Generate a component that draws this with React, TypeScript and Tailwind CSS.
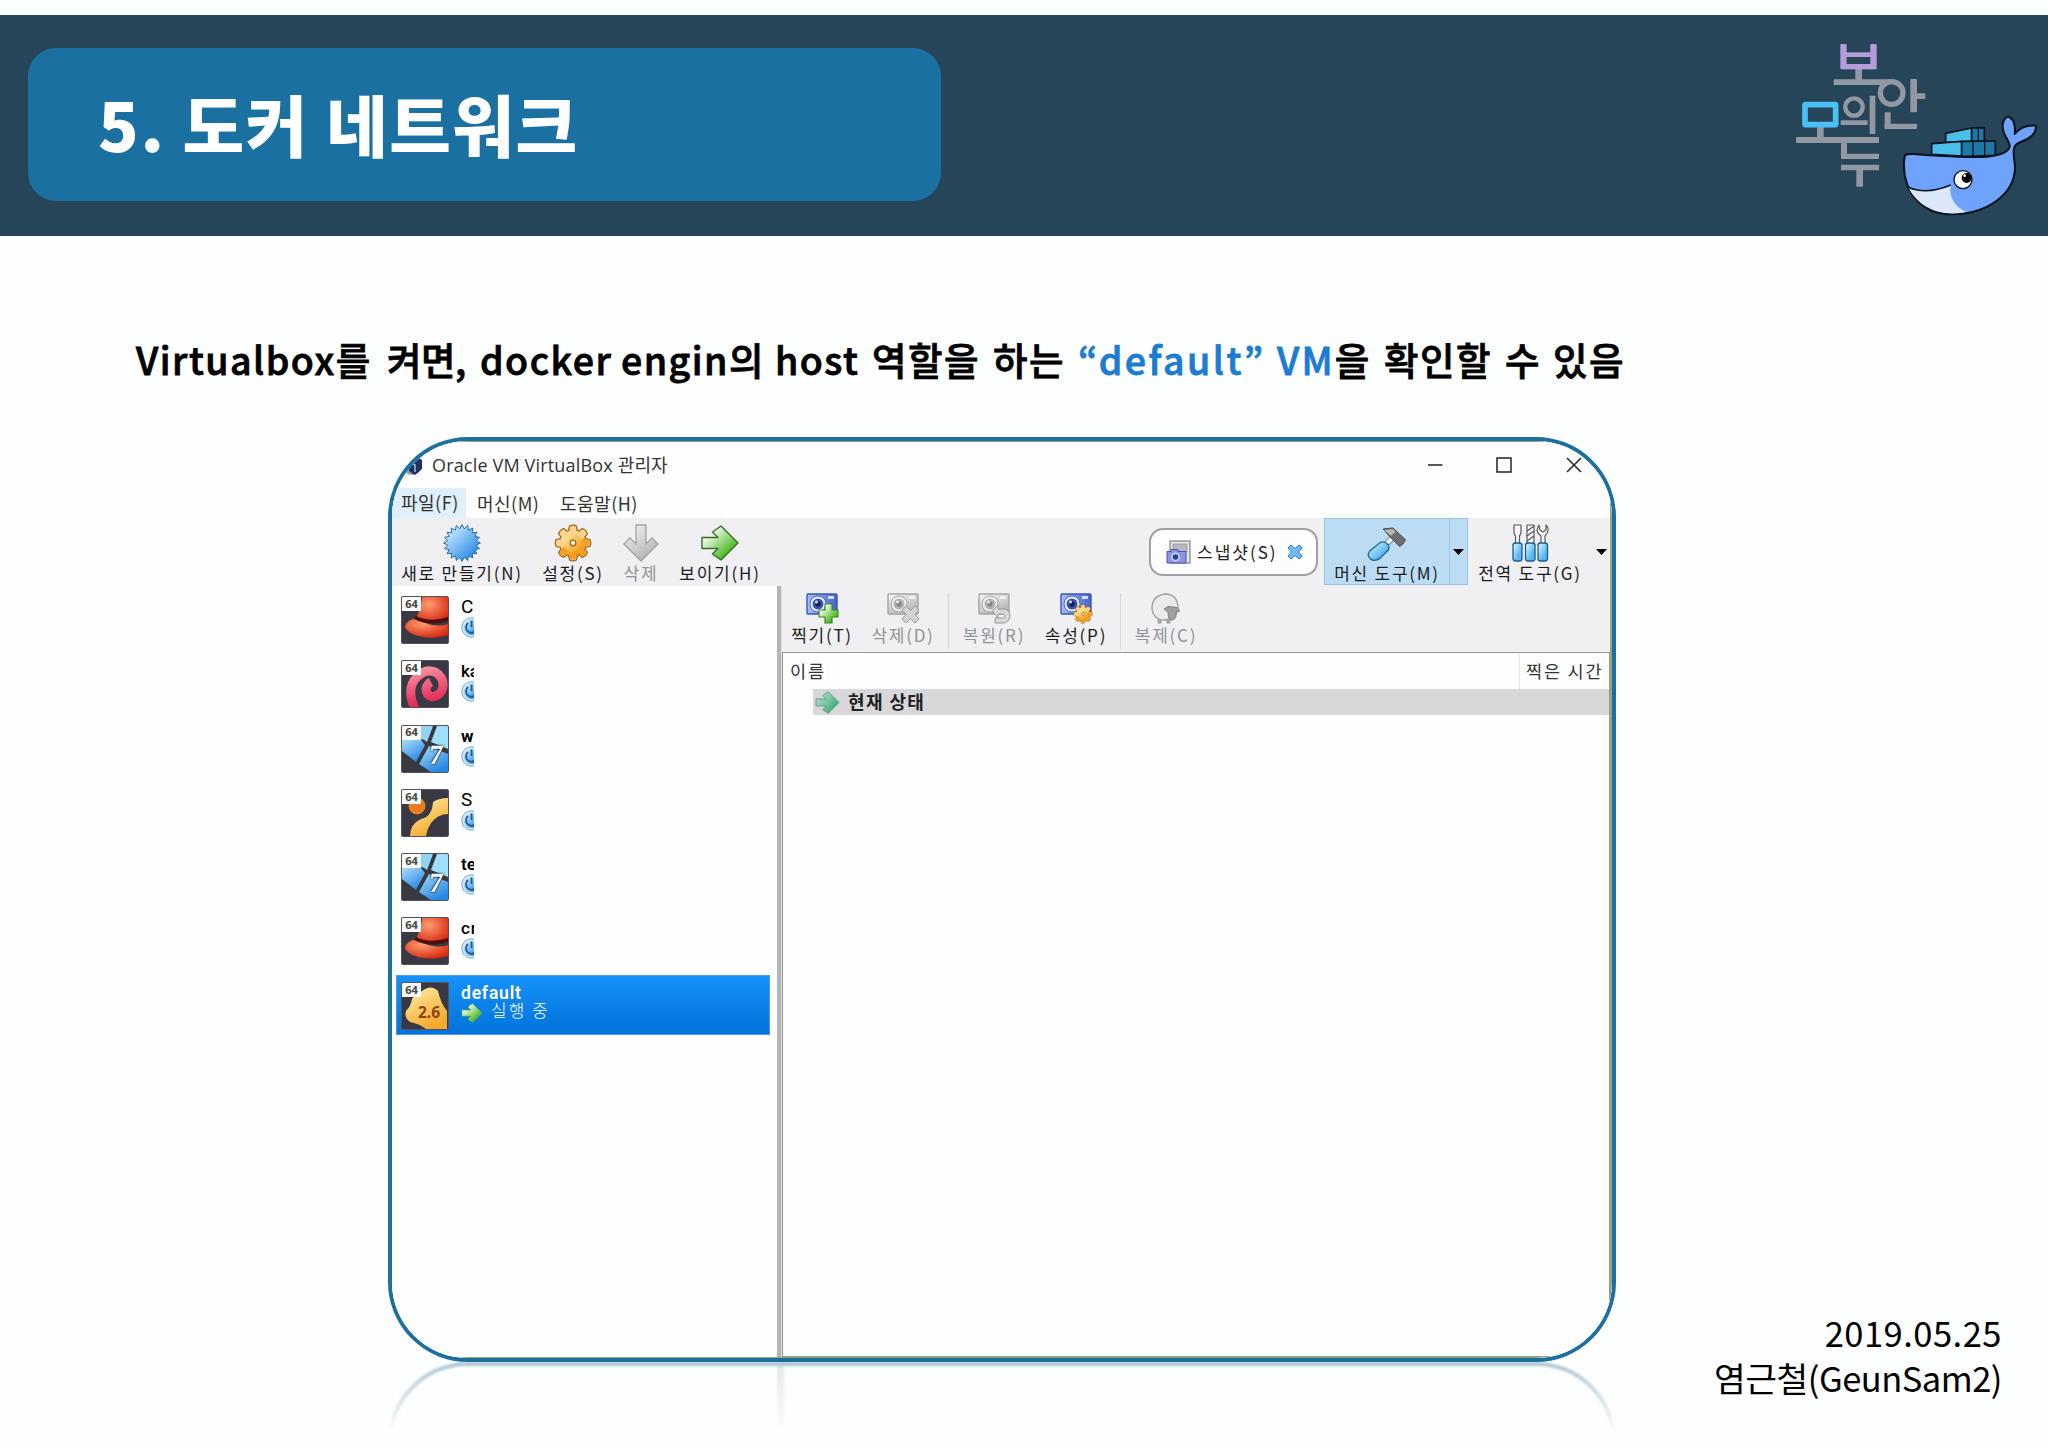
import type { ReactNode } from "react";
import clsx from "clsx";

type OsKind = "redhat" | "debian" | "win7" | "ubuntu" | "linux26";

interface Machine {
  name: string;
  os: OsKind;
  nameClass: string;
}

const machines: Machine[] = [
  { name: "C", os: "redhat", nameClass: "font-normal text-[19px]" },
  { name: "ka", os: "debian", nameClass: "font-medium" },
  { name: "w", os: "win7", nameClass: "font-bold" },
  { name: "S", os: "ubuntu", nameClass: "font-normal text-[19px]" },
  { name: "te", os: "win7", nameClass: "font-semibold" },
  { name: "cr", os: "redhat", nameClass: "font-medium tracking-[1px]" },
];

function Gradients() {
  return (
    <svg className="absolute h-0 w-0">
      <defs>
        <linearGradient id="blue" x1="0" y1="0" x2="1" y2="1">
          <stop offset="0.1" stopColor="#d3efff" />
          <stop offset="0.9" stopColor="#1d84e6" />
        </linearGradient>
        <linearGradient id="orange" x1="0" y1="0" x2="1" y2="1">
          <stop offset="0.1" stopColor="#fff0c4" />
          <stop offset="0.8" stopColor="#f59a13" />
        </linearGradient>
        <linearGradient id="green" x1="0" y1="0" x2="1" y2="1">
          <stop offset="0.2" stopColor="#f4fff0" />
          <stop offset="0.8" stopColor="#3fb312" />
        </linearGradient>
        <linearGradient id="teal" x1="0" y1="0" x2="1" y2="0.8">
          <stop offset="0" stopColor="#c3e6dc" />
          <stop offset="1" stopColor="#2fa866" />
        </linearGradient>
        <linearGradient id="gray" x1="0" y1="0" x2="0.6" y2="1">
          <stop offset="0" stopColor="#f6f6f6" />
          <stop offset="1" stopColor="#b3b3b5" />
        </linearGradient>
        <linearGradient id="camera" x1="0" y1="0" x2="1" y2="0">
          <stop offset="0" stopColor="#a9bdf8" />
          <stop offset="1" stopColor="#4263d6" />
        </linearGradient>
        <linearGradient id="handle" x1="0" y1="0" x2="1" y2="1">
          <stop offset="0" stopColor="#e6fbff" />
          <stop offset="0.7" stopColor="#55b4f2" />
        </linearGradient>
        <radialGradient id="red" cx="0.4" cy="0.3" r="0.75">
          <stop offset="0" stopColor="#ff9c72" />
          <stop offset="1" stopColor="#d8260e" />
        </radialGradient>
        <linearGradient id="pink" x1="0.3" y1="0" x2="0.5" y2="1">
          <stop offset="0" stopColor="#f98a9a" />
          <stop offset="1" stopColor="#e0184c" />
        </linearGradient>
        <linearGradient id="yellow" x1="0" y1="0" x2="0.5" y2="1">
          <stop offset="0" stopColor="#ffefae" />
          <stop offset="1" stopColor="#f5aa2c" />
        </linearGradient>
        <linearGradient id="pane" x1="0" y1="0" x2="0.6" y2="1">
          <stop offset="0" stopColor="#a5dffb" />
          <stop offset="1" stopColor="#2a86e4" />
        </linearGradient>
      </defs>
    </svg>
  );
}

function Logo() {
  return (
    <svg className="h-[220px] w-[268px] shrink-0" viewBox="0 0 804 660">
      <g fill="#9198a1">
        <rect x="226" y="146" width="20" height="34" />
        <rect x="161" y="178" width="170" height="17" rx="2" />
        <circle cx="335" cy="219" r="34" fill="#264559" stroke="#9198a1" strokeWidth="16" />
        <rect x="391" y="177" width="20" height="100" rx="2" />
        <rect x="405" y="220" width="31" height="17" rx="2" />
        <rect x="314" y="277" width="18" height="49" rx="2" />
        <rect x="314" y="311" width="97" height="16" rx="2" />
        <circle cx="222" cy="261" r="26" fill="none" stroke="#9198a1" strokeWidth="13" />
        <rect x="182" y="301" width="81" height="14" rx="2" />
        <rect x="269" y="227" width="17" height="115" rx="2" />
        <rect x="111" y="320" width="20" height="34" />
        <rect x="48" y="351" width="249" height="18" rx="2" />
        <rect x="183" y="360" width="18" height="57" rx="2" />
        <rect x="183" y="401" width="114" height="16" rx="2" />
        <rect x="183" y="434" width="114" height="17" rx="2" />
        <rect x="229" y="448" width="20" height="52" rx="2" />
      </g>
      <g fill="#b59ddb">
        <rect x="181" y="72" width="19" height="76" rx="3" />
        <rect x="271" y="72" width="19" height="76" rx="3" />
        <rect x="190" y="97" width="90" height="14" />
        <rect x="190" y="132" width="90" height="16" />
      </g>
      <rect x="75" y="254" width="92" height="60" rx="2" fill="none" stroke="#4bc0f7" strokeWidth="17" />

      <g stroke="#07121c" strokeWidth="5" strokeLinejoin="round">
        <path d="M497 340 575 324V364L497 368Z" fill="#49bfea" />
        <path d="M575 324 613 323V364H575Z" fill="#1b7ba6" />
        <path d="M455 371 545 364V408L455 403Z" fill="#49bfea" />
        <path d="M545 364 646 363V406L545 410Z" fill="#1b7ba6" />
        <path d="M579 364V410M614 363V408M595 326V360" fill="none" strokeWidth="4" />
        <path
          d="M375 405C385 401 395 402 402 402C470 407 560 414 620 410C660 406 684 398 689 380C691 362 665 345 668 315C670 296 680 287 690 292C703 300 707 322 704 342C720 322 745 315 768 317C770 341 748 358 722 366C708 371 702 380 701 392C700 410 705 425 705 445C702 525 620 582 515 583C425 583 368 515 372 425Z"
          fill="#6fa2fa"
          strokeWidth="6"
        />
        <path
          d="M386 503C425 518 472 512 512 497C506 530 525 563 560 575C480 594 412 558 386 503Z"
          fill="#dde7fb"
          stroke="none"
        />
        <path d="M383 501C425 520 472 512 512 495" fill="none" />
        <circle cx="549" cy="479" r="27" fill="#fff" strokeWidth="4" />
        <circle cx="560" cy="474" r="15" fill="#000" stroke="none" />
        <circle cx="554" cy="467" r="4" fill="#fff" stroke="none" />
      </g>
    </svg>
  );
}

function NewIcon() {
  const points = Array.from({ length: 40 }, (_, i) => {
    const r = i % 2 ? 14.4 : 18.4;
    const a = (i * Math.PI) / 20;
    return `${19 + r * Math.sin(a)},${19 - r * Math.cos(a)}`;
  }).join(" ");
  return (
    <svg className="h-[38px] w-[38px]" viewBox="0 0 38 38">
      <polygon points={points} fill="url(#blue)" stroke="#2c6da8" strokeWidth="1" />
    </svg>
  );
}

function Gear({ className }: { className?: string }) {
  const teeth = [0, 45, 90, 135, 180, 225, 270, 315];
  return (
    <svg className={className} viewBox="0 0 38 38">
      {teeth.map((deg) => (
        <path
          key={deg}
          d="M14 9 15.500 2Q19 .4 22.500 2L24 9"
          fill="#fbbf55"
          stroke="#9c6a20"
          strokeWidth="1.2"
          transform={`rotate(${deg} 19 19)`}
        />
      ))}
      <circle cx="19" cy="19" r="13.6" fill="#9c6a20" />
      <circle cx="19" cy="19" r="12.8" fill="url(#orange)" />
      {teeth.map((deg) => (
        <path key={deg} d="M15 10 16.300 3Q19 1.8 21.700 3L23 10Z" fill={deg > 60 && deg < 230 ? "#f59f1d" : "#fdd489"} transform={`rotate(${deg} 19 19)`} />
      ))}
      <circle cx="19" cy="19" r="2.8" fill="#fff0cf" stroke="#9c6a20" strokeWidth="1.3" />
    </svg>
  );
}

function ArrowIcon({ className, fill = "url(#green)", stroke = "#3c6b2a" }: { className?: string; fill?: string; stroke?: string }) {
  return (
    <svg className={className} viewBox="0 0 38 36">
      <path d="M1 12.5H17L11.5 7 20 1 37 18 20 35 11.5 29 17 23.5H1Z" fill={fill} stroke={stroke} strokeWidth="1.4" strokeLinejoin="round" />
    </svg>
  );
}

function HammerIcon() {
  return (
    <svg className="h-[36px] w-[42px]" viewBox="0 0 42 36">
      <path d="M17 17 25 9 29 13 21 20Z" fill="#eee" stroke="#666" />
      <path d="M17 2 27 1 40 13 38 17 34 20 23 9Z" fill="#6e6d70" stroke="#47484b" strokeLinejoin="round" />
      <path d="M18 3 27 2 30 5 25 9Z" fill="#b8b8ba" />
      <path d="M14 16Q18 14 22 18Q24 21 22 24L14 32Q9 36 4 33Q0 29 3 25Z" fill="url(#handle)" stroke="#1d6590" strokeWidth="1.4" />
    </svg>
  );
}

function ToolsIcon() {
  return (
    <svg className="h-[38px] w-[37px]" viewBox="0 0 37 38">
      <g fill="#f4f4f4" stroke="#58595c" strokeWidth="1.2" strokeLinejoin="round">
        <path d="M2 1H9V9L7.500 12V20H3.500V12L2 9Z" />
        <path d="M15 1H22V20H15Z" />
        <path d="M27 1Q24 6 26 9Q28 11 29 12V20H33V12Q36 9 36.200 6Q36 3 34 1V6L31 8 28 6Z" />
      </g>
      <path d="M15 7 22 2M15 12 22 7M15 17 22 12" stroke="#58595c" strokeWidth="1.3" />
      <g fill="url(#handle)" stroke="#1c5d88" strokeWidth="1.3">
        <rect x="1" y="19" width="9" height="18" rx="2.500" />
        <rect x="13.500" y="19" width="9.500" height="18" rx="2.500" />
        <rect x="26" y="19" width="9.500" height="18" rx="2.500" />
      </g>
    </svg>
  );
}

function SnapshotIcon() {
  return (
    <svg className="h-[24px] w-[25px]" viewBox="0 0 25 24">
      <rect x="4" y="1" width="20" height="22" fill="#e6e6e6" stroke="#6d6d70" />
      <rect x="7" y="4" width="14" height="8" fill="#b9bac0" stroke="#8a8a90" strokeWidth="0.700" />
      <path d="M1 11.500H5V9.500H12V11.500H20V23H1Z" fill="#8a95e6" stroke="#4a55b0" />
      <circle cx="9.500" cy="17" r="4.400" fill="#d0d6fa" />
      <circle cx="9.500" cy="17" r="2.800" fill="#2e3a96" />
    </svg>
  );
}

type CameraBadge = "plus" | "cross" | "undo" | "gear";

function CameraIcon({ badge, muted }: { badge: CameraBadge; muted?: boolean }) {
  return (
    <div className="relative h-[31px] w-[33px]">
      <svg className="h-[31px] w-[33px]" viewBox="0 0 33 31">
        <rect x="1" y="1" width="30" height="20" rx="1" fill={muted ? "url(#gray)" : "url(#camera)"} stroke={muted ? "#a4a4a6" : "#3b57b4"} strokeWidth="1.4" />
        <rect x="22" y="3" width="6" height="3" fill="#f4f6ff" opacity="0.8" />
        <circle cx="12" cy="11" r="8" fill={muted ? "#f1f1f1" : "#eef2ff"} stroke={muted ? "#a5a5a5" : "#4966be"} />
        <circle cx="12" cy="11" r="5.500" fill={muted ? "#b2b2b2" : "#3c55ac"} />
        <circle cx="12" cy="11" r="2.700" fill={muted ? "#888" : "#141c5c"} />
        <circle cx="10.500" cy="9" r="1.500" fill="#fff" opacity="0.8" />
        {badge === "plus" && <path d="M19 11H26V17H32V24H26V30H19V24H13V17H19Z" fill="url(#green)" stroke="#3f8a1c" strokeWidth="1.200" />}
        {badge === "cross" && <path d="M19 13 23.500 17.500 28 13 32 17 28 21.500 32 26 28 30 23.500 25.500 19 30 15 26 19 21.500 15 17Z" fill="#d4d4d4" stroke="#999" />}
        {badge === "undo" && <path d="M20 12V16H26Q32 17 32 23Q31 30 25 30H17V25H25Q27 25 27 22.500Q26 21 24 21H20V25L14 18Z" fill="#d8d8d8" stroke="#999" />}
      </svg>
      {badge === "gear" && <Gear className="absolute top-[11px] left-[13px] h-[20px] w-[20px]" />}
    </div>
  );
}

function SheepIcon() {
  return (
    <svg className="h-[31px] w-[32px]" viewBox="0 0 32 31">
      <path d="M8 25V30H11V26M17 26V30H20V25" fill="#aaa" stroke="#99999b" />
      <path d="M15 1Q27 1 28 14Q27 26 15 27Q3 27 2 15Q2 3 15 1Z" fill="#ebebec" stroke="#a0a0a2" strokeWidth="1.400" />
      <path d="M14 16Q18 12 22 14Q27 13 30 18L26 19Q27 26 22 27Q18 27 18 19Z" fill="#a0a0a2" stroke="#808083" />
    </svg>
  );
}

function PowerIcon() {
  return (
    <svg className="h-[21px] w-[21px] shrink-0" viewBox="0 0 21 21">
      <circle cx="10.500" cy="10.500" r="9.700" fill="#d5ecfb" stroke="#6ea6cc" />
      <circle cx="10.500" cy="10.500" r="7.600" fill="url(#blue)" />
      <path d="M7 6A5.500 5.500 0 1 0 14 6M10.500 3.500V10" fill="none" stroke="#1b5c9a" strokeWidth="1.800" />
    </svg>
  );
}

function OsIcon({ os }: { os: OsKind }) {
  return (
    <div className="relative h-[48px] w-[48px] shrink-0 overflow-hidden rounded-[2px] border border-[#53545c] bg-[#393943]">
      <svg className="h-[46px] w-[46px]" viewBox="0 0 46 46">
        {os === "redhat" && (
          <>
            <path d="M3 30Q4 23 15 21Q30 32 46 27V38Q32 43 16 39Q4 35 3 30Z" fill="url(#red)" />
            <path d="M14 21Q19 12 20 0H46V24Q28 28 14 21Z" fill="url(#red)" />
            <path d="M14 19Q28 26 46 20V24Q28 30 12 22Z" fill="#4b0f12" />
          </>
        )}
        {os === "debian" && (
          <path
            d="M13 48Q4 28 14 17Q23 7 33 11Q42 16 41 26Q39 35 30 36Q24 34 24 28Q25 23 29 21"
            fill="none"
            stroke="url(#pink)"
            strokeWidth="9"
          />
        )}
        {os === "win7" && (
          <>
            <path d="M19 0H31L25 16Q22 13 19 13Z" fill="#8fd3f5" />
            <path d="M35 0H46V23L29 16Z" fill="#9ee0fb" />
            <path d="M0 14H19L23 19 14 36 0 25Z" fill="url(#pane)" />
            <path d="M27 20 46 28V46H29L17 38Z" fill="url(#pane)" />
          </>
        )}
        {os === "ubuntu" && (
          <>
            <circle cx="15" cy="16" r="8.500" fill="#ee7a22" />
            <path d="M8 46Q8 34 19 29Q30 27 31 12Q37 8 46 8V24Q36 24 29 33Q25 39 24 46Z" fill="url(#yellow)" />
          </>
        )}
        {os === "linux26" && (
          <path d="M20 8Q29 1 36 8Q39 21 45 28V46H24Q18 41 8 39Q2 35 4 28Q9 23 10 16Q14 10 20 8Z" fill="url(#yellow)" />
        )}
      </svg>
      {os === "win7" && (
        <span className="absolute right-[5px] bottom-[5px] -skew-x-6 font-['Liberation_Serif',serif] text-[28px] leading-[24px] font-bold text-white [text-shadow:0_0_2px_#123,0_0_2px_#123]">
          7
        </span>
      )}
      {os === "linux26" && (
        <span className="absolute right-[8px] bottom-[9px] font-['Noto_Sans',sans-serif] text-[15.500px] leading-[16px] font-bold text-[#8a4312]">
          2.6
        </span>
      )}
      <span className="absolute top-0 left-0 flex h-[14px] w-[19px] items-center justify-center bg-[#fafafa] font-['Noto_Sans',sans-serif] text-[11px] font-bold text-[#444]">
        64
      </span>
    </div>
  );
}

function ToolButton({ icon, label, className, muted }: { icon: ReactNode; label: string; className?: string; muted?: boolean }) {
  return (
    <div className={clsx("flex shrink-0 flex-col items-center", muted ? "text-[#939395]" : "text-[#1c1c1e]", className)}>
      {icon}
      <span className="text-[17px] leading-[22px] tracking-[1.750px] whitespace-nowrap">{label}</span>
    </div>
  );
}

function Caret({ className }: { className?: string }) {
  return (
    <svg className={clsx("h-[6px] w-[11px] shrink-0", className)} viewBox="0 0 11 6">
      <path d="M0 0H11L5.500 6Z" fill="#000" />
    </svg>
  );
}

function TitleBar() {
  return (
    <div className="flex h-[46px] shrink-0 items-center pl-[11px] text-[#333]">
      <svg className="h-[20px] w-[20px]" viewBox="0 0 20 20">
        <circle cx="9" cy="10" r="10" fill="#8b98bb" />
        <path d="M5 4 12 0 19 5V14L12 20 6 16Z" fill="#1d3260" />
        <path d="M7 7 12 10V17" fill="none" stroke="#a8bfe6" strokeWidth="1.500" />
      </svg>
      <span className="ml-[9px] font-['Open_Sans','Noto_Sans_CJK_KR',sans-serif] text-[18px] tracking-[0.170px] whitespace-nowrap">
        Oracle VM VirtualBox 관리자
      </span>
      <svg className="mr-[28px] ml-auto h-[16px] w-[154px] shrink-0" viewBox="0 0 154 16" fill="none" stroke="#222" strokeWidth="1.500">
        <path d="M0 8H14.500" />
        <rect x="69" y="1" width="14" height="14" />
        <path d="M139 1 153 15M153 1 139 15" />
      </svg>
    </div>
  );
}

function MenuBar() {
  return (
    <div className="flex h-[30px] shrink-0 items-center text-[18px] leading-[29px] tracking-[0.500px] whitespace-nowrap text-[#333]">
      <span className="h-[30px] w-[74px] bg-[#dff0fc] pl-[9px]">파일(F)</span>
      <span className="ml-[11px] w-[72px]">머신(M)</span>
      <span className="ml-[11px]">도움말(H)</span>
    </div>
  );
}

function MainToolbar() {
  return (
    <div className="flex h-[68px] shrink-0 bg-[#f0eff1]">
      <ToolButton className="ml-[6px] w-[128px] pt-[6px]" icon={<NewIcon />} label="새로 만들기(N)" />
      <ToolButton className="ml-[12px] w-[70px] pt-[6px]" icon={<Gear className="h-[38px] w-[38px]" />} label="설정(S)" />
      <ToolButton
        className="ml-[8px] w-[50px] pt-[6px]"
        muted
        icon={
          <svg className="h-[38px] w-[36px]" viewBox="0 0 36 38">
            <path d="M13 1H23V20L29 14 35 20 18 37 1 20 7 14 13 20Z" fill="url(#gray)" stroke="#a3a3a5" strokeWidth="1.300" />
          </svg>
        }
        label="삭제"
      />
      <ToolButton className="ml-[9px] w-[90px] pt-[6px]" icon={<ArrowIcon className="h-[38px] w-[38px]" />} label="보이기(H)" />

      <div className="mt-[10px] ml-[384px] flex h-[48px] w-[169px] shrink-0 items-center rounded-[14px] border-2 border-[#a0a0a2] bg-[#fdfdfd] pl-[15px] text-[#222]">
        <SnapshotIcon />
        <span className="ml-[6px] w-[82px] text-[17px] tracking-[2px] whitespace-nowrap">스냅샷(S)</span>
        <svg className="ml-[8px] h-[16px] w-[16px]" viewBox="0 0 16 16">
          <path d="M4 1 8 4.500 12 1 15 4 11.500 8 15 12 12 15 8 11.500 4 15 1 12 4.500 8 1 4Z" fill="#6fbdf0" stroke="#2b76ae" />
        </svg>
      </div>

      <div className="ml-[6px] flex h-[67px] w-[144px] shrink-0 border border-[#93c3e8] bg-[#bcdcf4]">
        <ToolButton className="w-[125px] border-r border-[#9cc8ea] pt-[8px]" icon={<HammerIcon />} label="머신 도구(M)" />
        <Caret className="mt-[30px] ml-[3px]" />
      </div>
      <ToolButton className="ml-[6px] w-[112px] pt-[6px]" icon={<ToolsIcon />} label="전역 도구(G)" />
      <Caret className="mt-[31px] ml-[10px]" />
    </div>
  );
}

function MachineList() {
  return (
    <div className="flex w-[385px] shrink-0 flex-col gap-[4.300px] bg-[#fefefe] pt-[3px] pl-[4px]">
      {machines.map((m, i) => (
        <div key={i} className="flex h-[60px] w-[374px] gap-[12px] pt-[7px] pl-[5px]">
          <OsIcon os={m.os} />
          <div className="flex w-[13px] flex-col overflow-hidden pt-[1px]">
            <span className={clsx("font-['Roboto',sans-serif] text-[17px] leading-[20px] text-black", m.nameClass)}>{m.name}</span>
            <PowerIcon />
          </div>
        </div>
      ))}
      <div className="flex h-[60px] w-[374px] gap-[12px] border border-[#4b9ee6] bg-linear-to-b from-[#1692fb] to-[#0173da] pt-[6px] pl-[4px] text-white">
        <OsIcon os="linux26" />
        <div className="flex flex-col pt-[1px]">
          <span className="font-['Roboto',sans-serif] text-[17.500px] leading-[20px] font-semibold tracking-[0.800px]">default</span>
          <div className="flex h-[20px] items-start">
            <ArrowIcon className="h-[20px] w-[22px]" stroke="#5fae4c" />
            <span className="ml-[8px] text-[17px] leading-[14px] font-light tracking-[2px]">실행 중</span>
          </div>
        </div>
      </div>
    </div>
  );
}

function SnapshotPane() {
  return (
    <div className="flex min-w-0 flex-1 flex-col bg-[#f0eff1]">
      <div className="flex h-[66px] shrink-0 pt-[7px]">
        <ToolButton className="ml-[7px] w-[66px]" icon={<CameraIcon badge="plus" />} label="찍기(T)" />
        <ToolButton className="ml-[15px] w-[66px]" muted icon={<CameraIcon badge="cross" muted />} label="삭제(D)" />
        <div className="ml-[12px] h-[56px] w-px bg-[#d5d5d7]" />
        <ToolButton className="ml-[12px] w-[66px]" muted icon={<CameraIcon badge="undo" muted />} label="복원(R)" />
        <ToolButton className="ml-[16px] w-[66px]" icon={<CameraIcon badge="gear" />} label="속성(P)" />
        <div className="ml-[11px] h-[56px] w-px bg-[#d5d5d7]" />
        <ToolButton className="ml-[12px] w-[66px]" muted icon={<SheepIcon />} label="복제(C)" />
      </div>
      <div className="flex flex-1 flex-col border border-[#97979a] bg-[#fefefe]">
        <div className="flex h-[36px] items-center text-[17.500px] tracking-[1.800px] whitespace-nowrap text-[#333]">
          <span className="ml-[7px]">이름</span>
          <div className="ml-auto flex h-[35px] w-[90px] items-center border-l border-[#e3e3e5] pl-[6px]">찍은 시간</div>
        </div>
        <div className="ml-[30px] flex h-[26px] items-center bg-[#d8d7d9]">
          <ArrowIcon className="ml-[2px] h-[23px] w-[25px]" fill="url(#teal)" stroke="#5c9c84" />
          <span className="mb-[2px] ml-[8px] text-[18px] font-bold tracking-[1.400px] text-[#222]">현재 상태</span>
        </div>
      </div>
    </div>
  );
}

export default function App() {
  return (
    <div className="relative flex h-[1449px] w-[2048px] flex-col overflow-hidden bg-[#fdfefe] pt-[15px] font-['Noto_Sans_CJK_KR',sans-serif]">
      <Gradients />
      <header className="flex h-[221px] shrink-0 items-start justify-between bg-[#264559]">
        <div className="mt-[33px] ml-[28px] flex h-[153px] w-[913px] items-center rounded-[28px] bg-[#1b70a2] pl-[70px]">
          <h1 className="mb-[4px] text-[67px] leading-[80px] font-black tracking-[1.600px] whitespace-nowrap text-white">5. 도커 네트워크</h1>
        </div>
        <div className="mt-[5px]">
          <Logo />
        </div>
      </header>

      <p className="mt-[94px] ml-[136px] flex h-[58px] shrink-0 text-[37.500px] leading-[58px] font-medium tracking-[1.500px] whitespace-nowrap text-black [-webkit-text-stroke:0.800px]">
        <span className="w-[251px]">Virtualbox를</span>
        <span className="w-[93px] tracking-[-0.500px]">켜면,</span>
        <span className="w-[141px]">docker</span>
        <span className="w-[154px]">engin의</span>
        <span className="w-[97px]">host</span>
        <span className="w-[121px]">역할을</span>
        <span className="w-[85px]">하는</span>
        <span className="w-[199px] tracking-[2.500px] text-[#1c7cd2]">“default”</span>
        <span className="w-[107px] tracking-[2.200px]">
          <span className="text-[#1c7cd2]">VM</span>을
        </span>
        <span className="w-[121px]">확인할</span>
        <span className="w-[48px]">수</span>
        <span>있음</span>
      </p>

      <div className="mt-[49px] ml-[388px] h-[925px] w-[1228px] shrink-0 overflow-hidden rounded-[80px] border-4 border-[#1b70a0]">
        <div className="flex h-full flex-col border-t border-r-2 border-b border-[#92a77a] bg-[#fefefe]">
          <TitleBar />
          <MenuBar />
          <MainToolbar />
          <div className="flex flex-1">
            <MachineList />
            <div className="w-[5px] shrink-0 border-r border-[#dedee0] bg-[#b5b4b7]" />
            <SnapshotPane />
          </div>
        </div>
      </div>

      {/* faded reflection below the window */}
      <div className="ml-[388px] h-[76px] w-[1228px] shrink-0 overflow-hidden mask-linear-180 mask-linear-from-[0%] mask-linear-to-[92%]">
        <div className="h-[160px] rounded-[80px] border-4 border-[#a9c5d0] pl-[385px] blur-[1px]">
          <div className="h-full w-[7px] bg-[#e6e6e8]" />
        </div>
      </div>

      <footer className="absolute right-[46px] bottom-[49px] text-right text-[34.500px] leading-[45px] font-normal whitespace-nowrap text-black">
        <p className="tracking-[0.500px]">2019.05.25</p>
        <p className="tracking-[-0.500px]">염근철(GeunSam2)</p>
      </footer>
    </div>
  );
}
